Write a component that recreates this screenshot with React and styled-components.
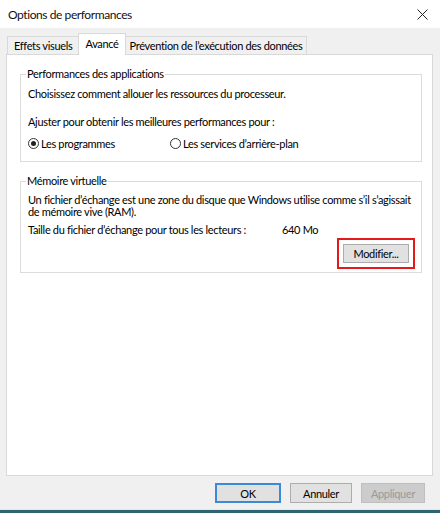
import React from "react";
import styled, { createGlobalStyle } from "styled-components";

const Global = createGlobalStyle`
  html, body { margin: 0; padding: 0; background: #f0f0f0; }
  body { font-family: "Lato", "Liberation Sans", sans-serif; font-size: 11px; letter-spacing: -0.33px; color: #000; }
  * { box-sizing: border-box; }
`;

const Screen = styled.div`
  width: 440px;
  height: 513px;
  display: flex;
  flex-direction: column;
  overflow: hidden;
`;

const Window = styled.div`
  flex: 1;
  display: flex;
  flex-direction: column;
  background: #f0f0f0;
`;

const TitleBar = styled.div`
  height: 28px;
  background: #fff;
  display: flex;
  align-items: center;
  justify-content: space-between;
  padding: 0 6px 0 8px;
  font-size: 12px;
  letter-spacing: -0.42px;
  color: #111;
`;

const CloseBtn = styled.div`
  width: 24px;
  height: 20px;
  display: flex;
  align-items: center;
  justify-content: center;
`;

const Body = styled.div`
  flex: 1;
  display: flex;
  flex-direction: column;
  padding: 5px 7px 0 6px;
`;

const TabRow = styled.div`
  display: flex;
  align-items: flex-end;
  height: 22px;
  padding-left: 1px;
  margin-bottom: -1px;
  position: relative;
  z-index: 1;
`;

const Tab = styled.div`
  height: ${(p) => (p.$active ? "22px" : "18px")};
  margin-bottom: ${(p) => (p.$active ? "0" : "1px")};
  margin-left: ${(p) => (p.$first ? "0" : "-1px")};
  padding: ${(p) => p.$pad || "0 5px"};
  padding-bottom: ${(p) => (p.$active ? "3px" : "0")};
  border: 1px solid #d9d9d9;
  border-bottom: none;
  background: ${(p) => (p.$active ? "#fff" : "#f0f0f0")};
  display: flex;
  align-items: center;
  white-space: nowrap;
  position: relative;
  z-index: ${(p) => (p.$active ? 2 : 1)};
`;

const Panel = styled.div`
  flex: 1;
  background: #fff;
  border: 1px solid #d9d9d9;
  padding: 12px 10px 0 13px;
  display: flex;
  flex-direction: column;
  gap: 12px;
`;

const Group = styled.fieldset`
  margin: 0;
  border: 1px solid #dcdcdc;
  padding: ${(p) => p.$pad || "6px 9px 11px 7px"};
  min-width: 0;
`;

const Legend = styled.legend`
  padding: 0 1px;
  margin-left: -2px;
  line-height: 14px;
`;

const Line = styled.div`
  line-height: ${(p) => p.$lh || 13}px;
  margin-top: ${(p) => p.$mt || 0}px;
  white-space: nowrap;
`;

const RadioRow = styled.div`
  display: flex;
  align-items: center;
  margin-top: 8px;
  height: 14px;
`;

const RadioItem = styled.label`
  display: flex;
  align-items: center;
  gap: 2px;
  width: ${(p) => p.$w || "auto"};
`;

const RadioCircle = styled.span`
  width: 11px;
  height: 11px;
  border-radius: 50%;
  border: 1px solid #333;
  background: #fff;
  display: flex;
  align-items: center;
  justify-content: center;
  &::after {
    content: "";
    width: 5px;
    height: 5px;
    border-radius: 50%;
    background: ${(p) => (p.$checked ? "#222" : "transparent")};
  }
`;

const SizeRow = styled.div`
  display: flex;
  margin-top: 5px;
  line-height: 13px;
`;

const SizeLabel = styled.span`
  width: 254px;
`;

const ActionRow = styled.div`
  display: flex;
  justify-content: flex-end;
  margin-top: 2px;
  margin-right: -3px;
  margin-bottom: -6px;
`;

const Highlight = styled.div`
  border: 2px solid #e3191c;
  padding: 4px;
`;

const Button = styled.button`
  width: ${(p) => p.$w || 66}px;
  height: ${(p) => p.$h || 20}px;
  font: inherit;
  font-size: 11px;
  letter-spacing: -0.33px;
  padding: 0;
  background: ${(p) => (p.$disabled ? "#cccccc" : "#e1e1e1")};
  color: ${(p) => (p.$disabled ? "#9a9a9a" : "#000")};
  border: ${(p) => (p.$default ? "2px solid #3c8ad6" : p.$disabled ? "1px solid #bfbfbf" : "1px solid #adadad")};
  display: flex;
  align-items: center;
  justify-content: center;
`;

const Footer = styled.div`
  height: 33px;
  display: flex;
  justify-content: flex-end;
  align-items: flex-start;
  gap: 9px;
  padding: 7px 8px 0 0;
`;

const Desktop = styled.div`
  height: 4px;
  border-top: 1px solid #f3e4c6;
  background: #2d6574;
`;

export default function App() {
  return (
    <Screen>
      <Global />
      <Window>
        <TitleBar>
          <span>Options de performances</span>
          <CloseBtn>
            <svg width="11" height="11" viewBox="0 0 11 11">
              <path d="M0.5 0.5 L10.5 10.5 M10.5 0.5 L0.5 10.5" stroke="#222" strokeWidth="1" fill="none" />
            </svg>
          </CloseBtn>
        </TitleBar>
        <Body>
          <TabRow>
            <Tab $first $pad="0 6px">Effets visuels</Tab>
            <Tab $active $pad="0 6px">Avancé</Tab>
            <Tab $pad="0 4px">Prévention de l’exécution des données</Tab>
          </TabRow>
          <Panel>
            <Group>
              <Legend>Performances des applications</Legend>
              <Line>Choisissez comment allouer les ressources du processeur.</Line>
              <Line $mt={15}>Ajuster pour obtenir les meilleures performances pour :</Line>
              <RadioRow>
                <RadioItem $w="142px">
                  <RadioCircle $checked />
                  Les programmes
                </RadioItem>
                <RadioItem>
                  <RadioCircle />
                  Les services d’arrière-plan
                </RadioItem>
              </RadioRow>
            </Group>
            <Group $pad="6px 9px 9px 7px">
              <Legend>Mémoire virtuelle</Legend>
              <Line $lh={12}>Un fichier d’échange est une zone du disque que Windows utilise comme s’il s’agissait</Line>
              <Line $lh={12}>de mémoire vive (RAM).</Line>
              <SizeRow>
                <SizeLabel>Taille du fichier d’échange pour tous les lecteurs :</SizeLabel>
                <span>640 Mo</span>
              </SizeRow>
              <ActionRow>
                <Highlight>
                  <Button $h={19}>Modifier...</Button>
                </Highlight>
              </ActionRow>
            </Group>
          </Panel>
          <Footer>
            <Button $default>OK</Button>
            <Button $w={62}>Annuler</Button>
            <Button $w={64} $disabled>Appliquer</Button>
          </Footer>
        </Body>
      </Window>
      <Desktop />
    </Screen>
  );
}
